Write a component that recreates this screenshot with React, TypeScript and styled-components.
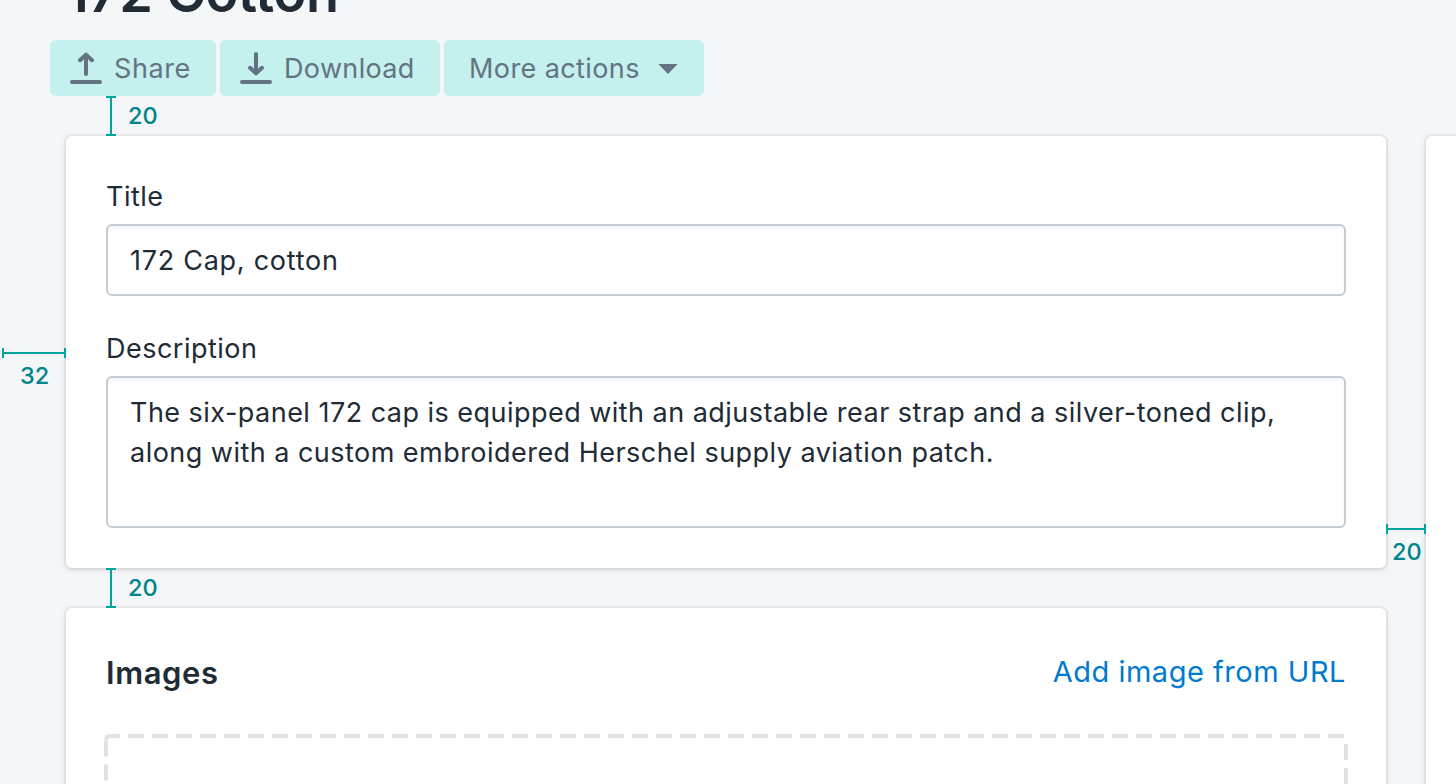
import React from "react";
import styled, { createGlobalStyle, css } from "styled-components";

const ink = "#212b36";
const subdued = "#637381";
const teal = "#00a5a0";
const tealText = "#00848e";

const GlobalStyle = createGlobalStyle`
  *, *::before, *::after { box-sizing: border-box; }
  body {
    margin: 0;
    background: #f4f6f8;
    color: ${ink};
    font-family: Inter, "Liberation Sans", sans-serif;
    font-size: 27px;
    line-height: 40px;
    -webkit-font-smoothing: antialiased;
  }
`;

const Page = styled.div`
  width: 1456px;
  height: 784px;
  overflow: hidden;
`;

const Header = styled.header`
  display: flex;
  flex-direction: column;
  align-items: flex-start;
  padding-left: 50px;
  height: 96px;
  justify-content: flex-end;
`;

const PageTitle = styled.h1`
  margin: 0 0 13px 16px;
  font-size: 54px;
  font-weight: 600;
  line-height: 69px;
  letter-spacing: -0.3px;
  white-space: nowrap;
  flex: none;
`;

const Actions = styled.div`
  display: flex;
  gap: 4px;
  flex: none;
`;

const ActionButton = styled.button<{ $width: number; $inset?: number }>`
  display: flex;
  align-items: center;
  width: ${(p) => p.$width}px;
  height: 56px;
  padding: 0 0 0 ${(p) => p.$inset ?? 20}px;
  border: 0;
  border-radius: 6px;
  background: #c4f0ee;
  color: ${subdued};
  font: inherit;
  white-space: nowrap;

  svg { flex: none; }
`;

const ActionLabel = styled.span<{ $tracking: number }>`
  padding-top: 2px;
  letter-spacing: ${(p) => p.$tracking}px;
`;

const GlyphBox = styled.svg`
  margin-right: 12px;
`;

const CaretBox = styled.svg`
  margin: 2px 26px 0 auto;
`;

const Columns = styled.main`
  display: flex;
  gap: 40px;
  padding: 40px 0 0 66px;
`;

const Primary = styled.div`
  display: flex;
  flex-direction: column;
  gap: 40px;
  flex: none;
  width: 1320px;
`;

const Card = styled.section`
  position: relative;
  padding: 40px;
  border-radius: 6px;
  background: #fff;
  box-shadow: 0 0 0 2px rgba(63, 63, 68, 0.05), 0 2px 6px rgba(63, 63, 68, 0.15);
`;

const SideCard = styled(Card)`
  flex: none;
  width: 640px;
  height: 900px;
`;

const Field = styled.div`
  & + & { margin-top: 32px; }
`;

const Label = styled.div<{ $tracking: number }>`
  padding-top: 1px;
  margin-bottom: 7px;
  letter-spacing: ${(p) => p.$tracking}px;
`;

const Control = styled.div<{ $height: number }>`
  height: ${(p) => p.$height}px;
  padding: 15px 22px 0;
  border: 2px solid #c4cdd5;
  border-radius: 6px;
  background: #fff;
  box-shadow: inset 0 2px 2px rgba(99, 115, 129, 0.08);
`;

const Line = styled.div<{ $tracking: number }>`
  white-space: nowrap;
  letter-spacing: ${(p) => p.$tracking}px;
`;

const CardHeader = styled.div`
  display: flex;
  align-items: center;
  justify-content: space-between;
  height: 48px;
  margin-bottom: 38px;
`;

const CardTitle = styled.h2`
  margin: 0;
  padding-top: 1px;
  font-size: 31px;
  font-weight: 600;
  letter-spacing: 0.6px;
`;

const LinkButton = styled.a`
  color: #007ace;
  font-size: 29px;
  letter-spacing: 0.52px;
  white-space: nowrap;
`;

const DropZone = styled.svg`
  display: block;
  margin: 0 -2px;
`;

const Spacer = styled.div<{ $axis: "x" | "y"; $length: number; $left: number; $top: number }>`
  position: absolute;
  z-index: 1;
  left: ${(p) => p.$left}px;
  top: ${(p) => p.$top}px;
  ${(p) =>
    p.$axis === "y"
      ? css`
          width: 10px;
          height: ${p.$length}px;
          border: solid ${teal};
          border-width: 2px 0;
          background: linear-gradient(${teal}, ${teal}) 4px 0 / 2px 100% no-repeat;
        `
      : css`
          width: ${p.$length}px;
          height: 10px;
          border: solid ${teal};
          border-width: 0 2px;
          background: linear-gradient(${teal}, ${teal}) 0 4px / 100% 2px no-repeat;
        `}
`;

const SpacerValue = styled.span<{ $left: number; $top: number }>`
  position: absolute;
  left: ${(p) => p.$left}px;
  top: ${(p) => p.$top}px;
  color: ${tealText};
  font-size: 23.5px;
  font-weight: 500;
  line-height: 24px;
`;

const ArrowGlyph = ({ up }: { up?: boolean }) => (
  <GlyphBox width="32" height="32" viewBox="0 0 32 32" fill="none" stroke={subdued} strokeWidth="4" strokeLinecap="round" strokeLinejoin="round">
    {up ? <path d="M16 3V22M10 8.2L16 2.6L22 8.2" /> : <path d="M16 2V21M10 15.8L16 21.4L22 15.8" />}
    <path d="M2 30H30" />
  </GlyphBox>
);

export default function App() {
  return (
    <Page>
      <GlobalStyle />
      <Header>
        <PageTitle>172 Cotton</PageTitle>
        <Actions>
          <ActionButton $width={166}>
            <ArrowGlyph up />
            <ActionLabel $tracking={0.6}>Share</ActionLabel>
          </ActionButton>
          <ActionButton $width={220}>
            <ArrowGlyph />
            <ActionLabel $tracking={0.35}>Download</ActionLabel>
          </ActionButton>
          <ActionButton $width={260} $inset={25}>
            <ActionLabel $tracking={0.4}>More actions</ActionLabel>
            <CaretBox width="20" height="10" viewBox="0 0 20 10" fill={subdued}>
              <path d="M0.3 0H19.7L10 10Z" />
            </CaretBox>
          </ActionButton>
        </Actions>
      </Header>
      <Columns>
        <Primary>
          <Card>
            <Spacer $axis="y" $length={40} $left={40} $top={-40} />
            <SpacerValue $left={62} $top={-32}>20</SpacerValue>
            <Spacer $axis="x" $length={64} $left={-64} $top={212} />
            <SpacerValue $left={-46} $top={228}>32</SpacerValue>
            <Spacer $axis="x" $length={40} $left={1320} $top={388} />
            <SpacerValue $left={1326} $top={404}>20</SpacerValue>
            <Field>
              <Label $tracking={0.5}>Title</Label>
              <Control $height={72}>
                <Line $tracking={0.73}>172 Cap, cotton</Line>
              </Control>
            </Field>
            <Field>
              <Label $tracking={0.48}>Description</Label>
              <Control $height={152}>
                <Line $tracking={0.47}>The six-panel 172 cap is equipped with an adjustable rear strap and a silver-toned clip,</Line>
                <Line $tracking={0.47}>along with a custom embroidered Herschel supply aviation patch.</Line>
              </Control>
            </Field>
          </Card>
          <Card>
            <Spacer $axis="y" $length={40} $left={40} $top={-40} />
            <SpacerValue $left={62} $top={-32}>20</SpacerValue>
            <CardHeader>
              <CardTitle>Images</CardTitle>
              <LinkButton>Add image from URL</LinkButton>
            </CardHeader>
            <DropZone width="1244" height="300" viewBox="0 0 1244 300" fill="none" stroke="#dfe3e8" strokeWidth="4">
              <path d="M24 2H1240" strokeDasharray="16 8" />
              <path d="M2 6Q2 2 7 2H16" />
              <path d="M2 6.500V300" strokeDasharray="16 8" />
              <path d="M1242 10V300" strokeDasharray="16 8" />
            </DropZone>
          </Card>
        </Primary>
        <SideCard />
      </Columns>
    </Page>
  );
}
